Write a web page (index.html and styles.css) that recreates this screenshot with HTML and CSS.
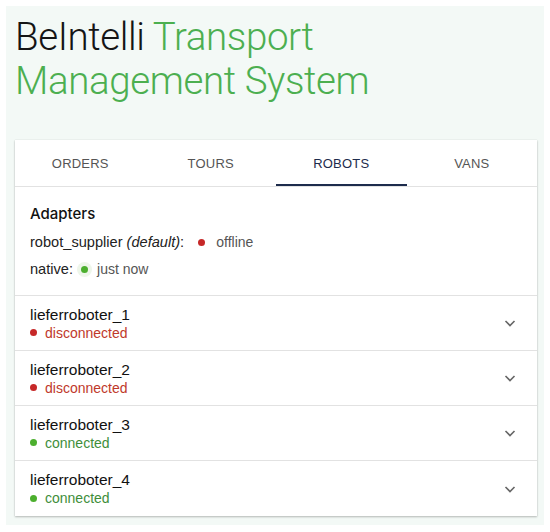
FILE: index.html
```html
<!DOCTYPE html>
<html>
<head>
<meta charset="utf-8">
<link rel="stylesheet" href="styles.css">
</head>
<body>
<div class="panel">
  <h1 class="title"><span class="brand">BeIntelli</span> <span class="accent">Transport Management System</span></h1>
  <div class="card">
    <nav class="tabs">
      <div class="tab">ORDERS</div>
      <div class="tab">TOURS</div>
      <div class="tab active">ROBOTS</div>
      <div class="tab">VANS</div>
    </nav>
    <section class="adapters">
      <h2 class="adapters-title">Adapters</h2>
      <div class="adapter">robot_supplier <em>(default)</em>: <span class="dot red wide"></span><span class="adapter-status">offline</span></div>
      <div class="adapter">native: <span class="dot green halo"></span><span class="adapter-status">just now</span></div>
    </section>
    <div class="robot">
      <div class="robot-info">
        <div class="robot-name">lieferroboter_1</div>
        <div class="robot-status off"><span class="dot red"></span>disconnected</div>
      </div>
      <svg class="chev" width="14" height="14" viewBox="0 0 14 14"><path d="M2.5 5 L7 9.5 L11.5 5" fill="none" stroke="#666" stroke-width="1.6"/></svg>
    </div>
    <div class="robot">
      <div class="robot-info">
        <div class="robot-name">lieferroboter_2</div>
        <div class="robot-status off"><span class="dot red"></span>disconnected</div>
      </div>
      <svg class="chev" width="14" height="14" viewBox="0 0 14 14"><path d="M2.5 5 L7 9.5 L11.5 5" fill="none" stroke="#666" stroke-width="1.6"/></svg>
    </div>
    <div class="robot">
      <div class="robot-info">
        <div class="robot-name">lieferroboter_3</div>
        <div class="robot-status on"><span class="dot green"></span>connected</div>
      </div>
      <svg class="chev" width="14" height="14" viewBox="0 0 14 14"><path d="M2.5 5 L7 9.5 L11.5 5" fill="none" stroke="#666" stroke-width="1.6"/></svg>
    </div>
    <div class="robot">
      <div class="robot-info">
        <div class="robot-name">lieferroboter_4</div>
        <div class="robot-status on"><span class="dot green"></span>connected</div>
      </div>
      <svg class="chev" width="14" height="14" viewBox="0 0 14 14"><path d="M2.5 5 L7 9.5 L11.5 5" fill="none" stroke="#666" stroke-width="1.6"/></svg>
    </div>
  </div>
</div>
</body>
</html>
```
FILE: styles.css
```css
html, body {
  margin: 0;
  padding: 0;
  background: #ffffff;
}
body {
  padding: 6px;
  font-family: "Liberation Sans", Arial, sans-serif;
  color: #1a1a1a;
}
.panel {
  width: 538px;
  box-sizing: border-box;
  background: #f3f9f6;
  padding: 9px 7px 9px 9px;
}
.title {
  margin: 0;
  padding: 0;
  font-family: Roboto, "Liberation Sans", sans-serif;
  font-weight: 300;
  font-size: 38.5px;
  line-height: 44px;
  height: 125px;
  letter-spacing: -0.4px;
}
.brand { color: #151515; }
.accent { color: #4caf50; }
.card {
  background: #ffffff;
  box-shadow: 0 1px 2px rgba(0,0,0,0.25), 0 0 1px rgba(0,0,0,0.12);
}
.tabs {
  display: grid;
  grid-template-columns: repeat(4, 1fr);
  border-bottom: 1px solid #e2e2e2;
}
.tab {
  height: 46px;
  display: flex;
  align-items: center;
  justify-content: center;
  font-size: 13px;
  color: #555;
  box-sizing: border-box;
  letter-spacing: 0.2px;
}
.tab.active {
  color: #1d2b4c;
  border-bottom: 2px solid #1d2b4c;
  padding-top: 2px;
}
.adapters {
  padding: 17px 15px 12px 15px;
  border-bottom: 1px solid #e2e2e2;
}
.adapters-title {
  margin: 0 0 5px 0;
  font-family: Inter, "Liberation Sans", sans-serif;
  font-size: 15px;
  font-weight: 500;
  line-height: 20px;
  color: #111;
}
.adapter {
  font-size: 14.6px;
  line-height: 27px;
  color: #222;
  display: flex;
  align-items: center;
  white-space: pre;
}
.adapter em { font-style: italic; }
.adapter-status {
  font-size: 14px;
  color: #555;
}
.dot {
  display: inline-block;
  width: 7px;
  height: 7px;
  border-radius: 50%;
  margin-right: 9px;
}
.adapter .dot { margin-left: 4px; }
.adapter .dot.wide { margin-left: 10px; margin-right: 11px; }
.dot.red { background: #c62828; }
.dot.green { background: #4caf2e; }
.dot.halo { box-shadow: 0 0 0 4px #eef6ea; }
.robot {
  display: flex;
  align-items: center;
  height: 54px;
  padding: 0 20px 0 15px;
  border-bottom: 1px solid #e2e2e2;
}
.robot:last-child { border-bottom: none; height: 55px; }
.robot-info { flex: 1; padding-top: 1px; }
.robot-name {
  font-size: 15.5px;
  line-height: 18px;
  color: #111;
}
.robot-status {
  font-size: 14px;
  line-height: 18px;
  display: flex;
  align-items: center;
}
.robot-status .dot { margin-right: 8px; }
.robot-status.off { color: #c0392b; }
.robot-status.on { color: #3e8e3a; }
.chev { display: block; }
```
